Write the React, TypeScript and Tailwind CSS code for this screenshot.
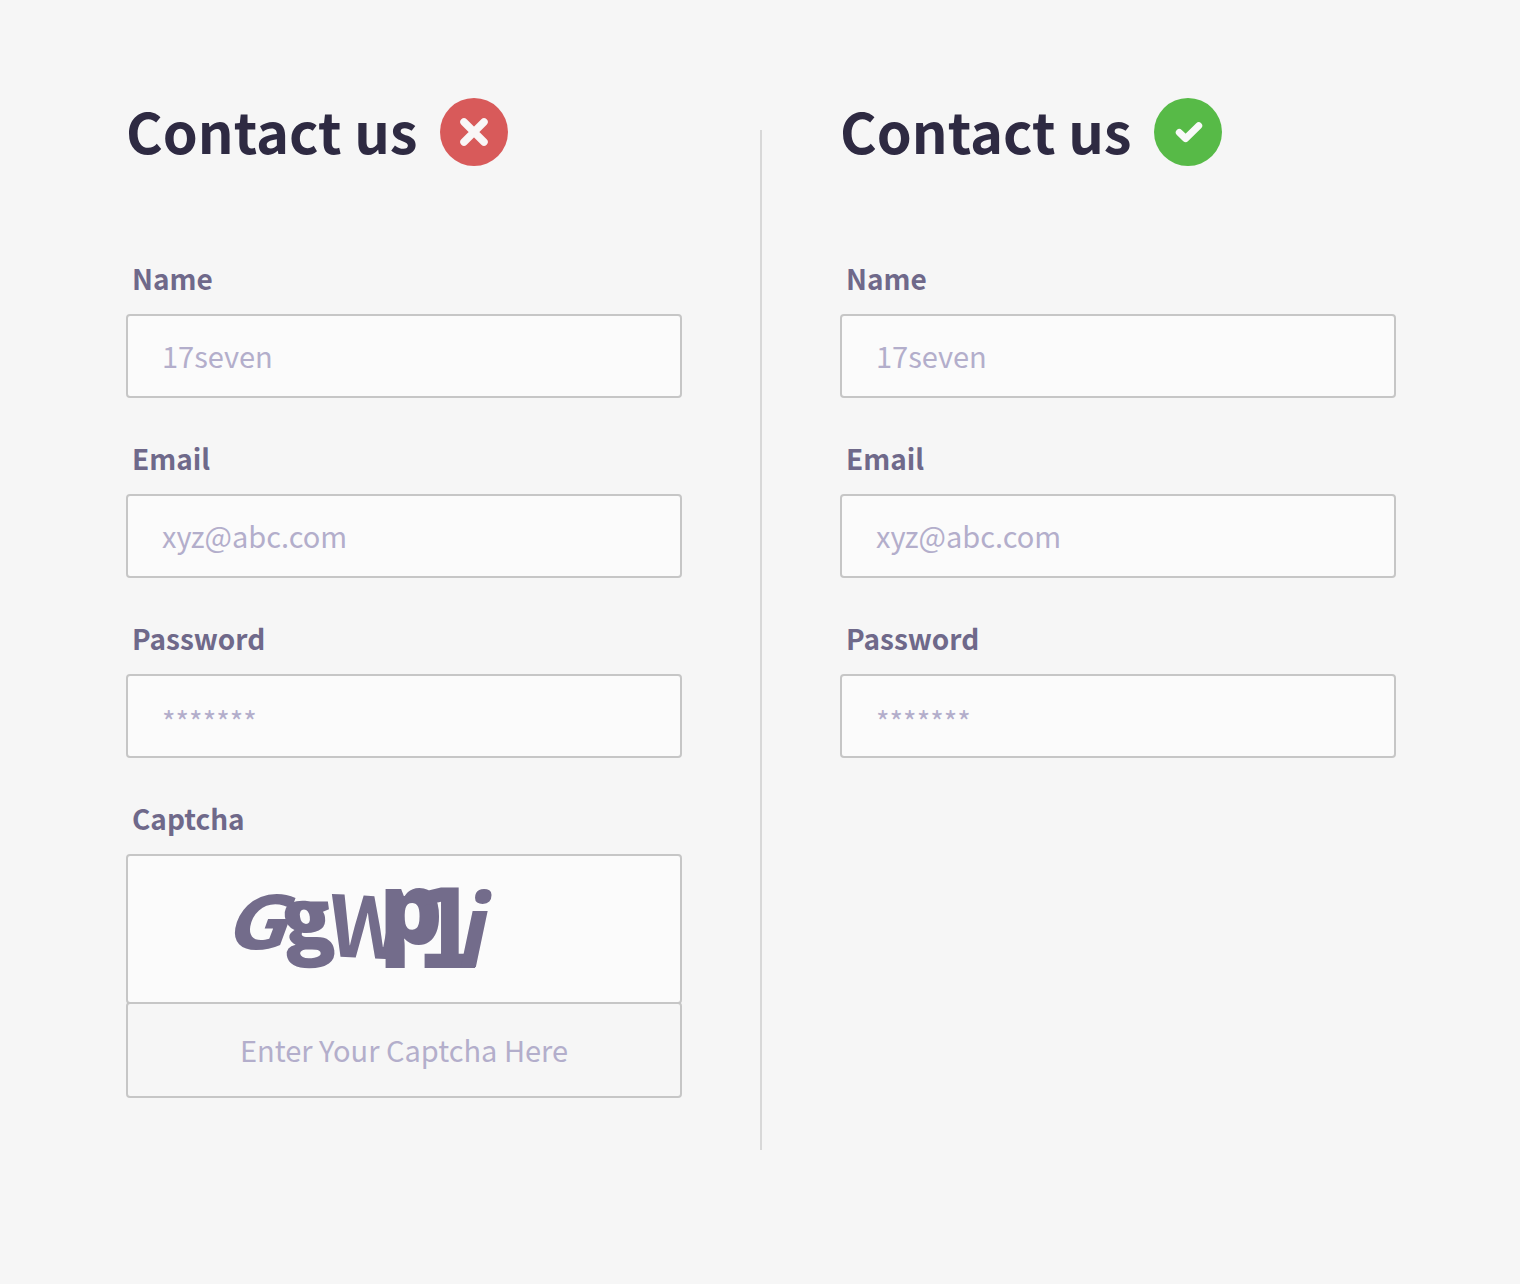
import { useId } from "react";

type FieldProps = { label: string; type: string; placeholder: string };

const fields: FieldProps[] = [
  { label: "Name", type: "text", placeholder: "17seven" },
  { label: "Email", type: "email", placeholder: "xyz@abc.com" },
  { label: "Password", type: "password", placeholder: "*******" },
];

const labelClass = "ml-1.5 block text-[28px] font-bold leading-10 text-[#6f698a]";

function Field({ label, type, placeholder }: FieldProps) {
  const id = useId();
  return (
    <div>
      <label htmlFor={id} className={labelClass}>
        {label}
      </label>
      <input
        id={id}
        type={type}
        placeholder={placeholder}
        className={`mt-4 block h-[84px] w-full rounded-sm border-2 border-[#c6c6c6] bg-[#fbfbfb] px-[34px] text-[29px] text-[#6f698a] placeholder:text-[#b3aecb] placeholder:opacity-100 ${
          type === "password" ? "pt-2" : "pb-0.5"
        }`}
      />
    </div>
  );
}

function CaptchaWord() {
  return (
    <svg
      viewBox="-20 -31 300 146"
      className="ml-[86px] block h-[146px] w-[300px] overflow-visible"
      fill="#736c8b"
      role="img"
      aria-label="GgWp1i"
    >
      <g fontFamily='"Open Sans", sans-serif' fontWeight="800">
        <text x="0" y="0" fontSize="74" fontWeight="700" fontStyle="italic" fontFamily='"DejaVu Sans", sans-serif' transform="translate(-5 62) skewX(-10)">G</text>
        <text x="0" y="0" fontSize="84" transform="translate(51 61) skewX(8)">g</text>
        <text x="0" y="0" fontSize="84" fontWeight="700" fontFamily='"Noto Sans CJK SC", sans-serif' transform="translate(93 69) rotate(3)">W</text>
        <text x="145" y="57" fontSize="100">p</text>
        <text x="179" y="81" fontSize="110" fontWeight="700" fontFamily='"DejaVu Sans Condensed", "DejaVu Sans", sans-serif'>1</text>
        <text x="225" y="80" fontSize="102" fontWeight="700" fontStyle="italic">i</text>
      </g>
    </svg>
  );
}

function Captcha() {
  const id = useId();
  return (
    <div>
      <label htmlFor={id} className={labelClass}>
        Captcha
      </label>
      <div className="mt-4 flex h-[150px] items-center rounded-sm border-2 border-[#c6c6c6] bg-[#fbfbfb]">
        <CaptchaWord />
      </div>
      <input
        id={id}
        type="text"
        placeholder="Enter Your Captcha Here"
        className="-mt-0.5 block h-24 w-full rounded-sm border-2 border-[#c6c6c6] bg-transparent px-8 pb-0.5 text-center text-[29px] text-[#6f698a] placeholder:text-[#b3aecb] placeholder:opacity-100"
      />
    </div>
  );
}

function CrossBadge() {
  return (
    <svg viewBox="0 0 68 68" className="size-[68px] shrink-0" role="img" aria-label="Not recommended">
      <circle cx="34" cy="34" r="34" fill="#d85a5a" />
      <path d="M24 24 44 44M44 24 24 44" stroke="#f9f6f6" strokeWidth="7.5" strokeLinecap="round" />
    </svg>
  );
}

function CheckBadge() {
  return (
    <svg viewBox="0 0 68 68" className="size-[68px] shrink-0" role="img" aria-label="Recommended">
      <circle cx="34" cy="34" r="34" fill="#57ba47" />
      <path d="M25.3 34.5 31.7 40.6 44.7 27.8" fill="none" stroke="#f9f9f9" strokeWidth="7" strokeLinecap="round" strokeLinejoin="round" />
    </svg>
  );
}

function ContactForm({ good }: { good: boolean }) {
  return (
    <form>
      <div className="flex items-center gap-[22px]">
        <h1 className="pb-1 text-[56px] font-bold leading-[64px] text-[#2e2a42]">Contact us</h1>
        {good ? <CheckBadge /> : <CrossBadge />}
      </div>
      <div className="mt-[92px] flex flex-col gap-10">
        {fields.map((field) => (
          <Field key={field.label} {...field} />
        ))}
        {!good && <Captcha />}
      </div>
    </form>
  );
}

export default function App() {
  return (
    <main className="grid min-h-screen grid-cols-[1fr_2px_1fr] items-start gap-[78px] bg-[#f6f6f6] pb-[134px] pl-[126px] pr-[124px] pt-[98px] font-['Noto_Sans_CJK_SC','Noto_Sans',sans-serif]">
      <ContactForm good={false} />
      <div className="mt-8 h-[1020px] bg-[#d8d8d8]" />
      <ContactForm good />
    </main>
  );
}
